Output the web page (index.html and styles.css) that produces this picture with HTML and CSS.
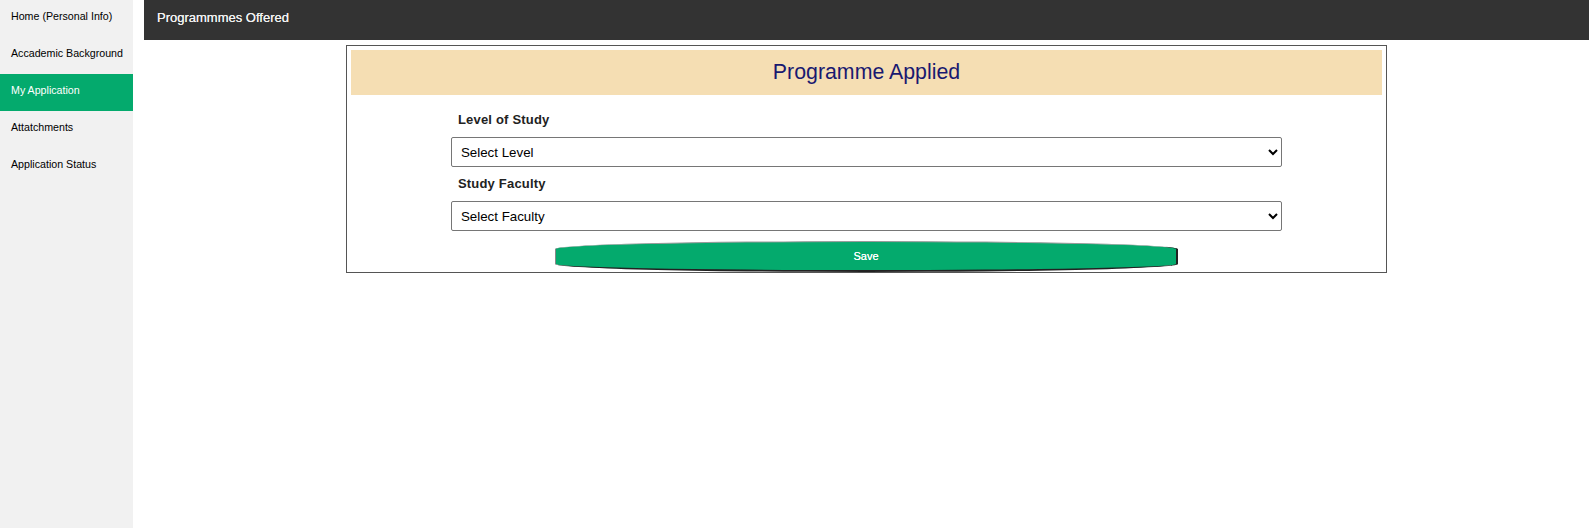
FILE: index.html
```html
<!DOCTYPE html>
<html lang="en">
<head>
<meta charset="utf-8">
<title>Programmes Offered</title>
<link rel="stylesheet" href="styles.css">
</head>
<body>
<div class="layout">
  <nav class="sidebar">
    <a class="nav-link" href="#">Home (Personal Info)</a>
    <a class="nav-link" href="#">Accademic Background</a>
    <a class="nav-link active" href="#">My Application</a>
    <a class="nav-link" href="#">Attatchments</a>
    <a class="nav-link" href="#">Application Status</a>
  </nav>
  <main class="main">
    <header class="topbar">Programmmes Offered</header>
    <section class="card">
      <h1 class="card-title">Programme Applied</h1>
      <form class="form">
        <label class="field-label" for="level">Level of Study</label>
        <select class="field-select" id="level">
          <option>Select Level</option>
        </select>
        <label class="field-label" for="faculty">Study Faculty</label>
        <select class="field-select" id="faculty">
          <option>Select Faculty</option>
        </select>
        <button class="save-btn" type="button">Save</button>
      </form>
    </section>
  </main>
</div>
</body>
</html>
```

FILE: styles.css
```css
* { box-sizing: border-box; }

html, body {
  margin: 0;
  padding: 0;
  height: 100%;
  background: #fff;
  font-family: "Liberation Sans", Arial, sans-serif;
}

.layout {
  display: flex;
  min-height: 100%;
  height: 528px;
}

.sidebar {
  width: 133px;
  flex: 0 0 133px;
  background: #f1f1f1;
  display: flex;
  flex-direction: column;
}

.nav-link {
  display: block;
  padding: 10px 11px 14px;
  font-size: 10.67px;
  line-height: 13px;
  color: #000;
  text-decoration: none;
  white-space: nowrap;
}

.nav-link.active {
  background: #04aa6d;
  color: #fff;
}

.main {
  flex: 1;
  padding: 0 1px 0 11px;
  display: flex;
  flex-direction: column;
  align-items: stretch;
}

.topbar {
  height: 40px;
  background: #333;
  color: #f2f2f2;
  font-size: 13px;
  line-height: 16px;
  padding: 10px 13px 14px;
  text-shadow: 0 0 0.4px #f2f2f2;
}

.card {
  width: 1041px;
  margin: 5px auto 0;
  border: 1px solid #555;
  padding: 0;
}

.card-title {
  margin: 4px 4px 0;
  height: 45px;
  background: #f5deb3;
  color: #191970;
  font-weight: normal;
  font-size: 21.33px;
  line-height: 45px;
  text-align: center;
}

.form {
  width: 80%;
  margin: 0 auto;
  display: flex;
  flex-direction: column;
  padding-top: 17px;
}

.field-label {
  font-size: 13px;
  line-height: 15px;
  font-weight: bold;
  color: #222;
  padding-left: 7px;
  margin-bottom: 10px;
  letter-spacing: 0.2px;
}

.field-select {
  height: 30px;
  width: 100%;
  border: 1px solid #767676;
  border-radius: 2px;
  font-family: "Liberation Sans", Arial, sans-serif;
  font-size: 13.33px;
  color: #000;
  padding: 0 4px 0 5px;
  background: #fff;
  margin-bottom: 9px;
}

.save-btn {
  align-self: center;
  width: 623px;
  height: 31px;
  margin-top: 1px;
  background: #04aa6d;
  color: #fff;
  font-family: "Liberation Sans", Arial, sans-serif;
  font-size: 11px;
  text-shadow: 0 0 0.4px #fff;
  border-style: solid;
  border-width: 1px 2px 2px 1px;
  border-color: #999 #222 #222 #888;
  border-radius: 50% / 8px;
  padding: 0;
  cursor: pointer;
}
```
